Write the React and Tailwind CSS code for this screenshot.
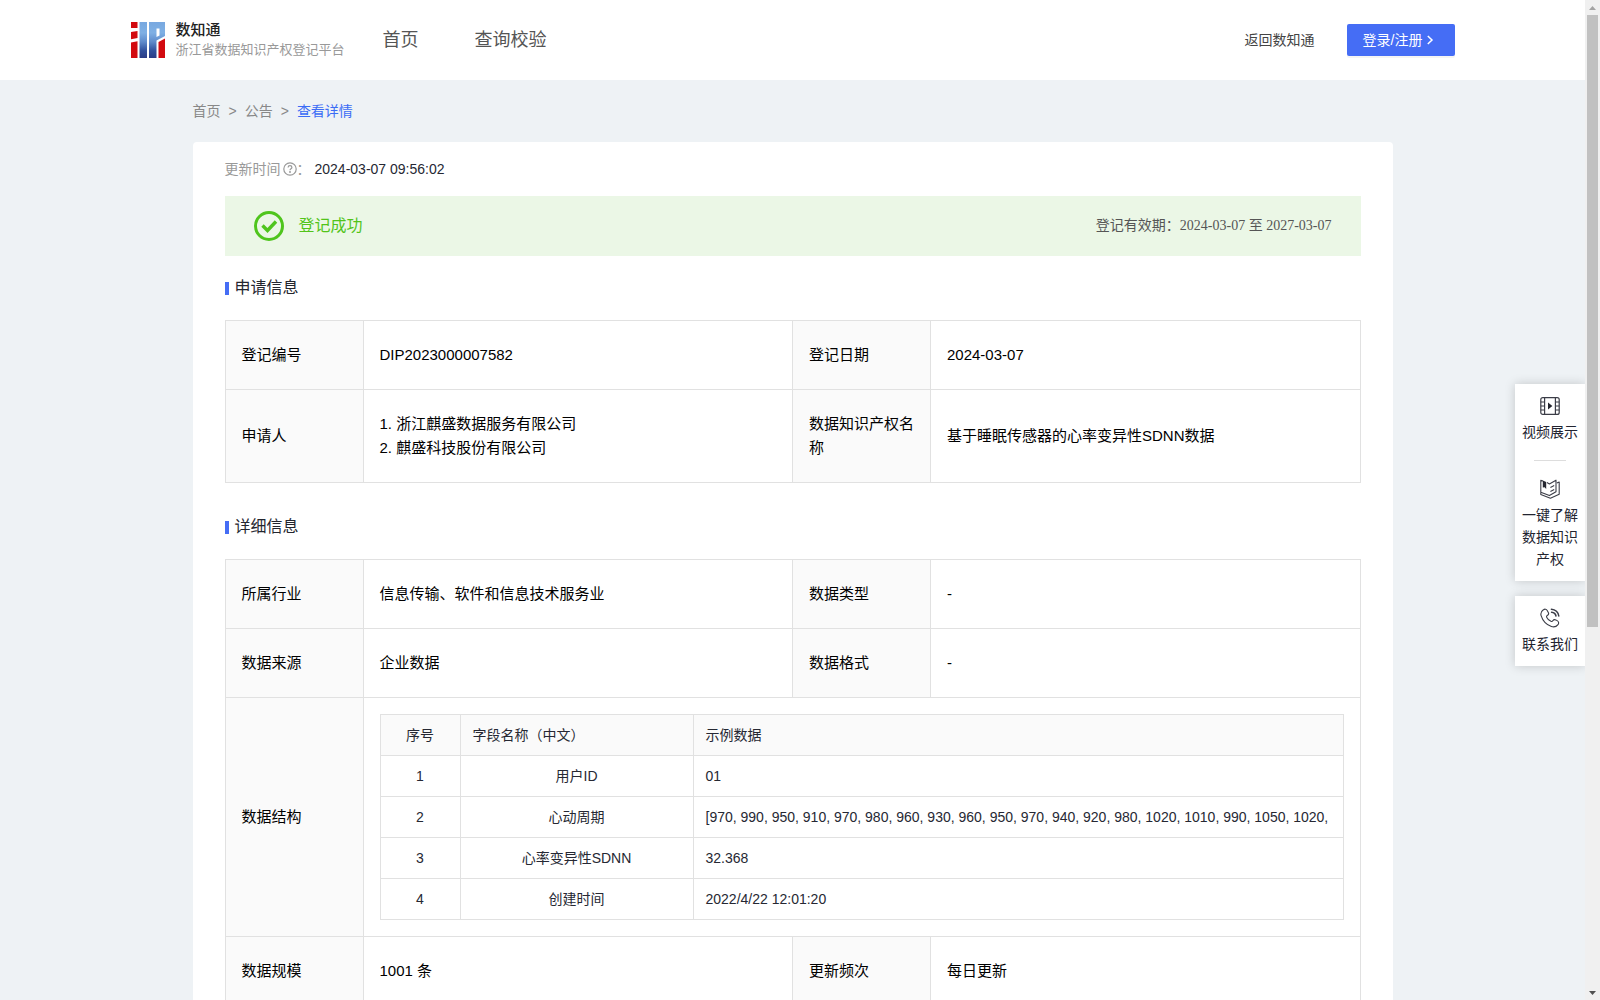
import React from "react";

const SANS = "font-['Liberation_Sans','Noto_Sans_CJK_SC',sans-serif]";
const SERIF = "font-['Liberation_Serif','Noto_Sans_CJK_SC',serif]";

const fields = [
  { name: "用户ID", sample: "01" },
  {
    name: "心动周期",
    sample:
      "[970, 990, 950, 910, 970, 980, 960, 930, 960, 950, 970, 940, 920, 980, 1020, 1010, 990, 1050, 1020,",
  },
  { name: "心率变异性SDNN", sample: "32.368" },
  { name: "创建时间", sample: "2022/4/22 12:01:20" },
];

function Logo() {
  return (
    <svg width="34" height="36" viewBox="0 0 34 36" aria-hidden="true">
      <defs>
        <linearGradient id="logoBlue" gradientUnits="userSpaceOnUse" x1="0" y1="0" x2="0" y2="36">
          <stop offset="0" stopColor="#78a8e0" />
          <stop offset="0.3" stopColor="#7fb0e4" />
          <stop offset="0.55" stopColor="#5f8bcb" />
          <stop offset="0.8" stopColor="#30509c" />
          <stop offset="1" stopColor="#2a3c86" />
        </linearGradient>
      </defs>
      <g fill="#d20a10">
        <rect x="0" y="0" width="6.5" height="6" />
        <path d="M0 10 L6.5 9 V16 L0 17.2 Z" />
        <path d="M0 20.5 L6.5 19.3 V36 H0 Z" />
        <path d="M27.5 20 L34 16.5 V36 H27.5 Z" />
      </g>
      <path d="M8.5 0 H16 V36 H8.5 Z" fill="url(#logoBlue)" />
      <path
        fillRule="evenodd"
        d="M18 0 H34 V14 L25.5 18.5 V36 H18 Z M25.5 6.5 V15 L28.5 13.5 V6.5 Z"
        fill="url(#logoBlue)"
      />
    </svg>
  );
}

function Header() {
  return (
    <header className="bg-white px-6">
      <div className="mx-auto flex h-20 max-w-[1324px] items-center">
        <a href="#home" className="flex items-center gap-[11px]">
          <Logo />
          <span className="flex flex-col">
            <span className="text-[15px] leading-5 font-medium text-[#222]">数知通</span>
            <span className="text-[13px] leading-5 text-[#999]">浙江省数据知识产权登记平台</span>
          </span>
        </a>
        <nav className="ml-[38px] flex gap-14 text-lg leading-6 text-[#555]">
          <a href="#home">首页</a>
          <a href="#query">查询校验</a>
        </nav>
        <a href="#back" className="ml-auto text-sm text-[#444]">
          返回数知通
        </a>
        <button
          type="button"
          className="ml-8 flex h-8 w-[108px] items-center gap-1 rounded-xs bg-[#456df5] pl-4 text-sm whitespace-nowrap text-white shadow-[0_2px_0_rgba(0,0,0,0.045)]"
        >
          登录/注册
          <svg width="8" height="10" viewBox="0 0 8 10" fill="none" stroke="currentColor" strokeWidth="1.5" aria-hidden="true">
            <path d="M1.8 1 L6 5 L1.8 9" />
          </svg>
        </button>
      </div>
    </header>
  );
}

function SectionTitle({ children }) {
  return (
    <h2 className="flex items-center gap-1.5 text-base leading-6 text-[#24262f]">
      <span className="mt-px h-[13px] w-1 bg-[#456df5]" />
      {children}
    </h2>
  );
}

function Label({ children }) {
  return (
    <th scope="row" className="border border-[#e1e1e1] bg-[#fafafa] py-[22px] pr-3 pl-4 text-left font-normal">
      {children}
    </th>
  );
}

function Value({ children }) {
  return <td className="border border-[#e1e1e1] px-4 py-[22px]">{children}</td>;
}

function InfoTable({ children }) {
  return (
    <table className="mt-5 w-full table-fixed border-collapse text-[15px] leading-6 text-black">
      <colgroup>
        <col className="w-[138px]" />
        <col />
        <col className="w-[138px]" />
        <col />
      </colgroup>
      <tbody>{children}</tbody>
    </table>
  );
}

function FieldTable() {
  const cell = "border border-[#e1e1e1] px-3 py-[9px]";
  return (
    <table className="w-full table-fixed border-collapse text-sm leading-[22px] text-[#262833]">
      <colgroup>
        <col className="w-20" />
        <col className="w-[233px]" />
        <col />
      </colgroup>
      <thead>
        <tr className="bg-[#fafafa]">
          <th scope="col" className={cell + " text-center font-normal"}>序号</th>
          <th scope="col" className={cell + " text-left font-normal"}>字段名称（中文）</th>
          <th scope="col" className={cell + " text-left font-normal"}>示例数据</th>
        </tr>
      </thead>
      <tbody>
        {fields.map((f, i) => (
          <tr key={f.name}>
            <td className={cell + " text-center"}>{i + 1}</td>
            <td className={cell + " text-center"}>{f.name}</td>
            <td className={cell + " overflow-hidden whitespace-nowrap"}>{f.sample}</td>
          </tr>
        ))}
      </tbody>
    </table>
  );
}

function FilmIcon() {
  return (
    <svg width="20" height="20" viewBox="0 0 20 20" fill="none" stroke="#3b3d47" strokeWidth="1.2" aria-hidden="true">
      <rect x="0.8" y="1.6" width="18.4" height="16.8" rx="2" />
      <path d="M4.6 1.6 V18.4 M15.4 1.6 V18.4 M0.8 6 H4.6 M0.8 10 H4.6 M0.8 14 H4.6 M15.4 6 H19.2 M15.4 10 H19.2 M15.4 14 H19.2" />
      <path d="M8 6.6 L12.4 10 L8 13.4 Z" fill="#24262f" stroke="none" />
    </svg>
  );
}

function BookIcon() {
  return (
    <svg width="20" height="20" viewBox="0 0 20 20" fill="none" stroke="#3b3d47" strokeWidth="1.1" strokeLinejoin="round" aria-hidden="true">
      <path d="M7 3.6 L9.4 5 L16 1.2 V12.8 L9.4 16.6 L0.8 13.2 V1.2 L3 2" />
      <path d="M0.8 13.4 V15.4 L10.4 19.2 L19.2 15.2 V3 L16.8 4" />
      <path d="M2.8 1.4 L6.2 3 V10 L4.6 8.2 L2.8 8.6 Z" fill="#24262f" stroke="none" />
      <path d="M10.4 8.6 L14.2 6.6 M10.4 12.6 L14.2 10.6" />
    </svg>
  );
}

function PhoneIcon() {
  return (
    <svg width="20" height="20" viewBox="0 0 20 20" fill="none" stroke="#3b3d47" strokeWidth="1.1" strokeLinejoin="round" strokeLinecap="round" aria-hidden="true">
      <path d="M3.4 1.8 C4.6 0.8 6.4 1 7.2 2.4 L8.3 4.4 C8.9 5.5 8.4 6.8 7.3 7.4 C6.4 7.9 6.4 8.7 6.8 9.4 C7.7 11.1 9.2 12.6 10.9 13.3 C11.7 13.6 12.4 13.4 12.8 12.7 C13.5 11.7 14.7 11.3 15.8 11.9 L17.5 12.9 C18.8 13.7 19 15.4 18 16.6 C16.4 18.6 14 19.4 11.4 18.5 C6.6 16.8 2.6 12.4 1.1 7.6 C0.4 5.2 1.3 3.2 3.4 1.8 Z" />
      <path d="M11.4 1.2 C15.4 1.4 18.4 4.4 18.8 8 M11.6 4.2 C13.8 4.4 15.6 6 16 8" strokeWidth="1.5" />
    </svg>
  );
}

function SideTools() {
  return (
    <aside className="absolute top-96 right-0 w-[70px] text-center text-sm leading-[22px] text-[#222430]">
      <div className="flex flex-col items-center bg-white px-[7px] pt-3 pb-[11px] shadow-[0_0_10px_rgba(0,0,0,0.18)]">
        <a href="#video" className="flex flex-col items-center gap-[5px]">
          <FilmIcon />
          视频展示
        </a>
        <span className="mt-[17px] mb-[18px] h-px w-8 bg-[#ddd]" />
        <a href="#guide" className="flex flex-col items-center gap-[5px]">
          <BookIcon />
          一键了解数据知识产权
        </a>
      </div>
      <a
        href="#contact"
        className="mt-[15px] flex flex-col items-center gap-[5px] bg-white pt-3 pb-[11px] shadow-[0_0_10px_rgba(0,0,0,0.18)]"
      >
        <PhoneIcon />
        联系我们
      </a>
    </aside>
  );
}

function ScrollTrack() {
  return (
    <div className="flex w-[15px] shrink-0 flex-col items-center bg-[#f0f0f0]" aria-hidden="true">
      <span className="flex h-[15px] items-center">
        <svg width="7" height="4" viewBox="0 0 7 4" fill="#a3a3a3"><path d="M0 4 L3.5 0 L7 4 Z" /></svg>
      </span>
      <span className="min-h-0 w-[11px] shrink grow-0 basis-[612px] bg-[#c1c1c1]" />
      <span className="mt-auto flex h-[15px] items-center">
        <svg width="7" height="4" viewBox="0 0 7 4" fill="#505050"><path d="M0 0 L3.5 4 L7 0 Z" /></svg>
      </span>
    </div>
  );
}

export default function App() {
  return (
    <div className={SANS + " flex h-screen overflow-hidden bg-[#eef2f5]"}>
      <div className="relative min-w-0 flex-1 overflow-hidden">
        <Header />
        <main className="mx-auto max-w-[1200px]">
          <nav className="flex gap-2 pt-5 pb-5 text-sm leading-[22px] text-[#888]">
            <a href="#home">首页</a>
            <span>&gt;</span>
            <a href="#notice">公告</a>
            <span>&gt;</span>
            <a href="#detail" className="text-[#3b6cf5]">查看详情</a>
          </nav>
          <div className="rounded bg-white px-8 pt-4">
            <p className="flex items-center text-sm leading-[22px] text-[#999]">
              更新时间
              <svg className="ml-0.5" width="14" height="14" viewBox="0 0 14 14" fill="none" stroke="#999" strokeWidth="1.2" aria-hidden="true">
                <circle cx="7" cy="7" r="6.2" />
                <path d="M5.1 5.5 C5.1 3.1 8.9 3.1 8.9 5.5 C8.9 6.8 7 6.8 7 8.3" />
                <circle cx="7" cy="10" r="0.4" />
              </svg>
              ：
              <span className="ml-1 text-[#262833]">2024-03-07 09:56:02</span>
            </p>
            <div className="mt-4 flex h-[60px] items-center bg-[#ebf7e6] px-[29px]">
              <svg width="30" height="30" viewBox="0 0 30 30" fill="none" stroke="#4fc51d" aria-hidden="true">
                <circle cx="15" cy="15" r="13.5" strokeWidth="3" />
                <path d="M8.5 14.5 L13.5 19.5 L22 10.5" strokeWidth="3.4" />
              </svg>
              <span className="ml-[15px] text-base leading-6 text-[#52c41a]">登记成功</span>
              <span className={SERIF + " ml-auto text-sm text-[#555]"}>登记有效期：2024-03-07 至 2027-03-07</span>
            </div>

            <section className="pt-5">
              <SectionTitle>申请信息</SectionTitle>
              <InfoTable>
                <tr>
                  <Label>登记编号</Label>
                  <Value>DIP2023000007582</Value>
                  <Label>登记日期</Label>
                  <Value>2024-03-07</Value>
                </tr>
                <tr>
                  <Label>申请人</Label>
                  <Value>
                    1. 浙江麒盛数据服务有限公司
                    <br />
                    2. 麒盛科技股份有限公司
                  </Value>
                  <Label>数据知识产权名称</Label>
                  <Value>基于睡眠传感器的心率变异性SDNN数据</Value>
                </tr>
              </InfoTable>
            </section>

            <section className="pt-8">
              <SectionTitle>详细信息</SectionTitle>
              <InfoTable>
                <tr>
                  <Label>所属行业</Label>
                  <Value>信息传输、软件和信息技术服务业</Value>
                  <Label>数据类型</Label>
                  <Value>-</Value>
                </tr>
                <tr>
                  <Label>数据来源</Label>
                  <Value>企业数据</Value>
                  <Label>数据格式</Label>
                  <Value>-</Value>
                </tr>
                <tr>
                  <Label>数据结构</Label>
                  <td colSpan={3} className="border border-[#e1e1e1] p-4">
                    <FieldTable />
                  </td>
                </tr>
                <tr>
                  <Label>数据规模</Label>
                  <Value>1001 条</Value>
                  <Label>更新频次</Label>
                  <Value>每日更新</Value>
                </tr>
              </InfoTable>
            </section>
          </div>
        </main>
        <SideTools />
      </div>
      <ScrollTrack />
    </div>
  );
}
